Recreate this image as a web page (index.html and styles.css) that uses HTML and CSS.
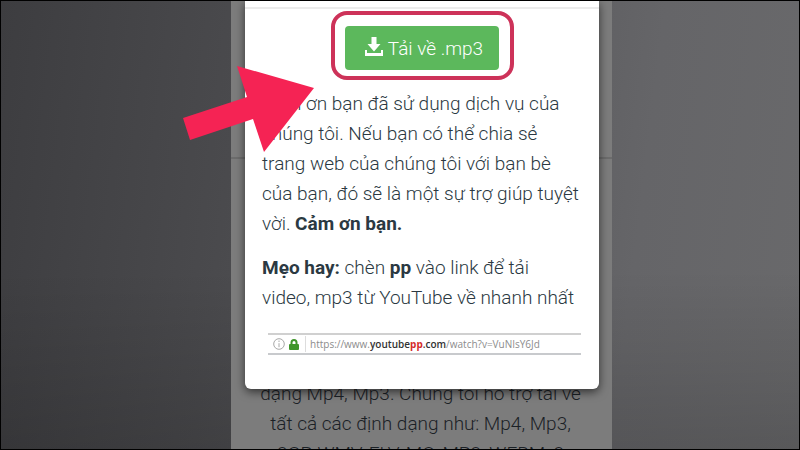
FILE: index.html
```
<!DOCTYPE html>
<html lang="vi">
<head>
    <meta charset="UTF-8">
    <meta name="viewport" content="width=device-width, initial-scale=1.0">
    <title>Tải về .mp3</title>
    <link rel="stylesheet" href="styles.css">
</head>
<body>
    <div class="stage">
        <main class="phone">
            <!-- Dimmed page -->
            <div class="page">
                <div class="page-top"></div>
                <p class="page-text">dạng Mp4, Mp3. Chúng tôi hỗ trợ tải về<br>tất cả các định dạng như: Mp4, Mp3,<br>3GP, WMV, FLV, MO, MP3, WEBM, 3</p>
            </div>

            <!-- Download dialog -->
            <section class="modal" role="dialog" aria-label="Tải về">
                <div class="modal-header"></div>
                <div class="modal-body">
                    <div class="highlight">
                        <button class="btn-download" type="button">
                            <svg class="icon-download" viewBox="0 0 18 19" aria-hidden="true">
                                <path d="M6.500 0h5v7h4L9 14.500 2.500 7h4zM0 13h2v3h14v-3h2v6H0z"/>
                            </svg>
                            <span>Tải về .mp3</span>
                        </button>
                    </div>
                    <p>Cảm ơn bạn đã sử dụng dịch vụ của chúng tôi. Nếu bạn có thể chia sẻ trang web của chúng tôi với bạn bè của bạn, đó sẽ là một sự trợ giúp tuyệt vời. <strong>Cảm ơn bạn.</strong></p>
                    <p><strong>Mẹo hay:</strong> chèn <strong>pp</strong> vào link để tải<br>video, mp3 từ YouTube về nhanh nhất</p>
                    <div class="address-bar">
                        <svg class="icon-info" viewBox="0 0 12 12" aria-hidden="true">
                            <circle cx="6" cy="6" r="5.300"/>
                            <path d="M6 5.200v4M6 2.500v1.500"/>
                        </svg>
                        <svg class="icon-lock" viewBox="0 0 10 11" aria-hidden="true">
                            <path class="shackle" d="M2.500 5V3.500a2.500 2.500 0 0 1 5 0V5"/>
                            <rect x="0" y="5" width="10" height="6" rx="1"/>
                        </svg>
                        <span class="url">https://www.<b>youtube<em>pp</em>.com</b>/watch?v=VuNIsY6Jd</span>
                    </div>
                </div>
            </section>

            <!-- Pointer -->
            <svg class="arrow" viewBox="0 0 132 86" aria-hidden="true">
                <path d="M0 52 64 31 54 0 131 22 81 86 70 53 7 74z"/>
            </svg>
        </main>
    </div>
</body>
</html>
```

FILE: styles.css
```
* {
    margin: 0;
    padding: 0;
    box-sizing: border-box;
}

body {
    font-family: Roboto, "Noto Sans", sans-serif;
    font-size: 19px;
    font-weight: 300;
    line-height: 30px;
    color: #2b3942;
    background-color: #000;
}

.stage {
    display: grid;
    grid-template-columns: 230fr 381fr 187fr;
    height: 100vh;
    overflow: hidden;
    border: 1px solid #000;
    background:
        linear-gradient(180deg, rgba(0, 0, 0, 0) 60%, rgba(0, 0, 0, 0.16)),
        linear-gradient(97deg, #3d3d40 0%, #4a4a4d 29%, #656568 78%, #69696b 100%);
}

.phone {
    grid-column: 2;
    position: relative;
    min-height: 0;
}

/* Page behind the dialog */
.page {
    height: 100%;
    overflow: hidden;
    background-color: #7c7c7c;
    color: #1b2126;
    text-align: center;
}

.page-top {
    height: 158px;
    border-bottom: 2px solid #6c6c6c;
}

.page-text {
    padding: 220px 2px 0 0;
    white-space: nowrap;
}

/* Dialog */
.modal {
    position: absolute;
    top: 0;
    left: 14px;
    right: 13px;
    background-color: #fff;
    border-radius: 0 0 6px 6px;
    box-shadow: 0 3px 10px rgba(0, 0, 0, 0.6);
}

.modal-header {
    height: 8px;
    border-bottom: 2px solid #ececec;
}

.modal-body {
    padding: 2px 16px 34px 17px;
}

.modal-body p {
    margin-bottom: 14px;
}

.modal-body strong {
    font-weight: 700;
}

.highlight {
    width: max-content;
    margin: 0 auto 9px;
    padding: 11px 11px 6px 10px;
    border: 4px solid #cd3259;
    border-radius: 16px;
}

.btn-download {
    display: flex;
    align-items: center;
    gap: 5px;
    height: 44px;
    padding: 0 16px 0 20px;
    border: none;
    border-radius: 4px;
    background-color: #5cb85c;
    color: #fff;
    font-family: inherit;
    font-size: 19px;
    font-weight: 300;
    cursor: pointer;
}

.icon-download {
    width: 18px;
    height: 19px;
    margin-bottom: 4px;
    fill: #fff;
}

.address-bar {
    display: flex;
    align-items: center;
    height: 22px;
    margin: 20px 2px 0 6px;
    padding-left: 5px;
    border-top: 2px solid #d0d0d0;
    border-bottom: 2px solid #c8cacd;
    font-family: "Open Sans", "Noto Sans", sans-serif;
    font-size: 10px;
    font-weight: 400;
    line-height: 16px;
    color: #8c8c8c;
}

.icon-info {
    width: 12px;
    height: 12px;
    fill: none;
    stroke: #a8a8a8;
}

.icon-lock {
    width: 10px;
    height: 11px;
    margin: 0 6px 0 4px;
    fill: #3f962a;
}

.icon-lock .shackle {
    fill: none;
    stroke: #3f962a;
    stroke-width: 2;
}

.url {
    padding-left: 4px;
    border-left: 1px solid #ddd;
    white-space: nowrap;
}

.url b {
    font-weight: 600;
    color: #333;
}

.url em {
    font-style: normal;
    font-weight: 700;
    color: #d42a2a;
}

/* Arrow lies over the dialog and the wallpaper */
.arrow {
    position: absolute;
    top: 65px;
    left: -48px;
    width: 132px;
    height: 86px;
    fill: #f52354;
}
```
